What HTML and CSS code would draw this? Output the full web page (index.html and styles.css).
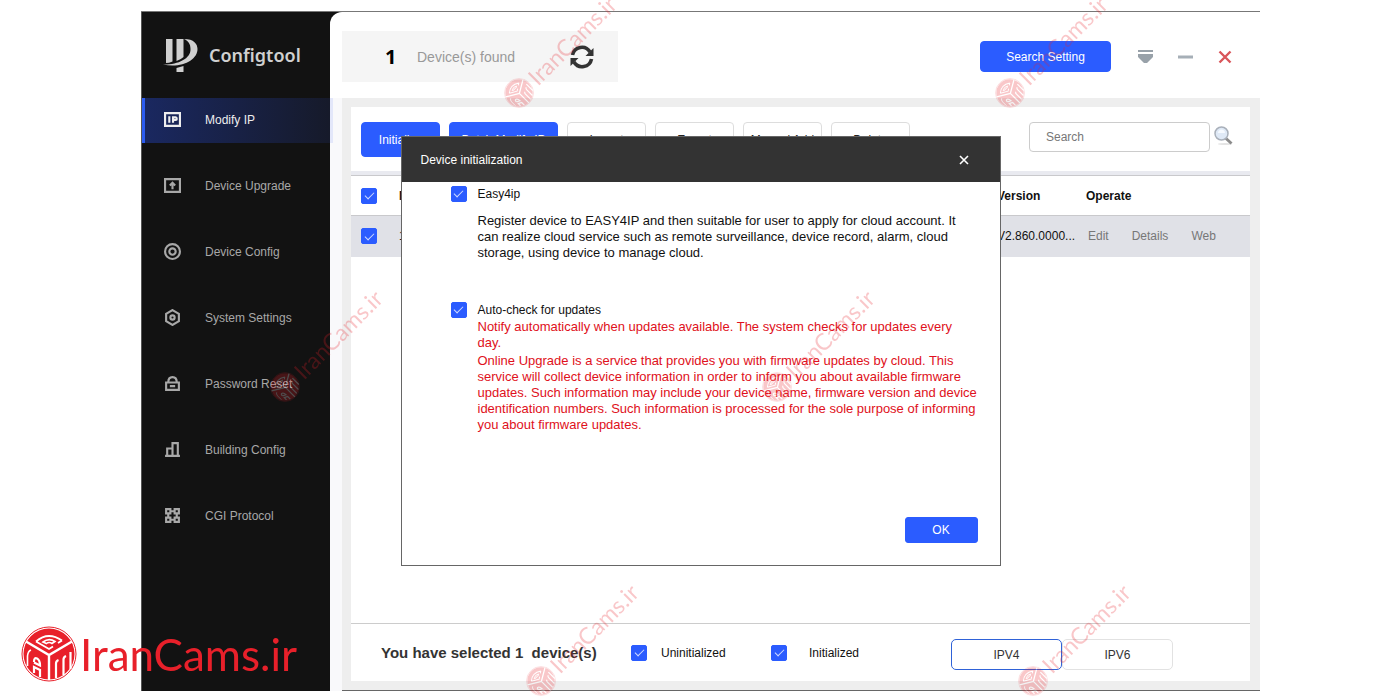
FILE: index.html
```html
<!DOCTYPE html>
<html lang="en">
<head>
    <meta charset="UTF-8">
    <meta name="viewport" content="width=device-width, initial-scale=1.0">
    <title>Configtool</title>
    <link rel="stylesheet" href="styles.css">
</head>
<body>
    <!-- shared brand symbol -->
    <svg class="defs" width="0" height="0" aria-hidden="true">
        <symbol id="cube" viewBox="0 0 56 56">
            <circle cx="28" cy="28" r="27" fill="none" stroke="currentColor" stroke-width="1"/>
            <circle cx="28" cy="28" r="25.500" fill="currentColor"/>
            <g fill="none" stroke="#fff" stroke-width="2.400">
                <path d="M5 15.500L28 29L51 15.500M28 29V54"/>
                <path d="M15 15.500Q27 5 41 14.500M41 14.500L37 17M15 15.500L28 23L32 20.500" stroke-width="1.800"/>
                <path d="M22 16Q28 11.500 34 15.500L31 17.500Q28 15.500 25.500 17.500Z" stroke-width="1.600"/>
                <path d="M8 44V34Q9 24 16 27.500Q23 31 23.500 39V52" stroke-width="0"/>
                <path d="M13 47V41L19 44V51M13 36Q13 31 16 32.500Q19 34 19 39.500L13 36.500" stroke-width="2.200"/>
                <path d="M6.500 40V30Q7 25 10 24" stroke-width="1.600"/>
                <path d="M35 52V37.500Q35 35 37.500 34M42.500 49V33.500Q42.500 31 45 30M49.500 43V26" stroke-width="2.200"/>
            </g>
        </symbol>
    </svg>

    <div class="window">
        <aside class="sidebar">
            <div class="logo">
                <svg width="35" height="33" viewBox="0 0 35 33" fill="#d0d0d0" aria-hidden="true">
                    <path d="M3 0H9.500V22.500Q6 24 3 24Z"/>
                    <path d="M13.500 0H20.500V18Q18 20.500 13.500 22Z"/>
                    <path d="M21 0C31 0 34.500 5 34.500 10C34.500 21 19 29.500 0 25.500C14 26 28 20 27.500 10C27.500 5 25.500 2 21 0Z"/>
                    <path d="M13.500 29L20.500 27V33H13.500Z"/>
                </svg>
                <span>Configtool</span>
            </div>
            <nav class="menu">
                <a href="#" class="active">
                    <svg viewBox="0 0 16 16"><path d="M1 2H15V14H1Z"/><path d="M5 5V11M8.500 11V6H11Q12 6 12 7.500Q12 8.500 11 8.500H8.500"/></svg>
                    Modify IP
                </a>
                <a href="#">
                    <svg viewBox="0 0 16 16"><path d="M1 2H15V14H1Z"/><path d="M8 11.500V6M5.500 8L8 5.500L10.500 8"/></svg>
                    Device Upgrade
                </a>
                <a href="#">
                    <svg viewBox="0 0 16 16"><circle cx="8" cy="8" r="7"/><circle cx="8" cy="8" r="3"/></svg>
                    Device Config
                </a>
                <a href="#">
                    <svg viewBox="0 0 16 16"><path d="M8 1L14 4.500V11.500L8 15L2 11.500V4.500Z"/><circle cx="8" cy="8" r="2"/></svg>
                    System Settings
                </a>
                <a href="#">
                    <svg viewBox="0 0 16 16"><path d="M2 7H14V14H2Z"/><path d="M4 7Q4 2 8 2Q12 2 12 7M5.500 10.500H10.500"/></svg>
                    Password Reset
                </a>
                <a href="#">
                    <svg viewBox="0 0 16 16"><path d="M1 14H15M3 14V7H7.500M8 14V2H13V14"/></svg>
                    Building Config
                </a>
                <a href="#">
                    <svg viewBox="0 0 16 16"><path d="M2 2H6V6H2ZM10 2H14V6H10ZM2 10H6V14H2ZM10 10H14V14H10ZM6 4H10M6 12H10M4 6V10M12 6V10"/></svg>
                    CGI Protocol
                </a>
            </nav>
        </aside>

        <main class="main">
            <header class="topbar">
                <div class="found">
                    <strong>1</strong>
                    <span>Device(s) found</span>
                    <button class="icon-btn" aria-label="Refresh">
                        <svg width="24" height="24" viewBox="0 0 24 24" fill="none" stroke="#333" stroke-width="3.600">
                            <path d="M2.500 10A9.500 9.500 0 0 1 20 7"/>
                            <path d="M21.500 14A9.500 9.500 0 0 1 4 17"/>
                            <path d="M23.500 3V11H15.500Z" fill="#333" stroke="none"/>
                            <path d="M.5 21V13H8.500Z" fill="#333" stroke="none"/>
                        </svg>
                    </button>
                </div>
                <div class="window-tools">
                    <button class="btn primary search-setting">Search Setting</button>
                    <button class="icon-btn" aria-label="Menu">
                        <svg width="15" height="14" viewBox="0 0 15 14" fill="#98a1a9"><path d="M0 0H15V2H0ZM0 4H15V7L9 13H6L0 7Z"/></svg>
                    </button>
                    <button class="icon-btn" aria-label="Minimize">
                        <svg width="15" height="14" viewBox="0 0 15 14"><path d="M0 7H15" stroke="#a6afb7" stroke-width="3"/></svg>
                    </button>
                    <button class="icon-btn" aria-label="Close">
                        <svg width="14" height="14" viewBox="0 0 14 14"><path d="M1.500 1.500L12.500 12.500M12.500 1.500L1.500 12.500" stroke="#d9555a" stroke-width="2.400"/></svg>
                    </button>
                </div>
            </header>

            <div class="content">
                <div class="toolbar">
                    <button class="btn primary">Initialize</button>
                    <button class="btn primary wide">Batch Modify IP</button>
                    <button class="btn">Import</button>
                    <button class="btn">Export</button>
                    <button class="btn">Manual Add</button>
                    <button class="btn">Delete</button>
                    <div class="search">
                        <input type="text" placeholder="Search" aria-label="Search">
                        <button class="icon-btn" aria-label="Search">
                            <svg width="20" height="20" viewBox="0 0 20 20">
                                <ellipse cx="11" cy="18" rx="7" ry="1" fill="#e4e4e4"/>
                                <path d="M11.500 12L17.500 17.500" stroke="#8b8b8b" stroke-width="3"/>
                                <circle cx="7.500" cy="7.500" r="6.500" fill="#dfe9f6" stroke="#a9b0ba" stroke-width="1.500"/>
                                <path d="M4 7Q4 4 7 3.500Q11 3.500 11 7Z" fill="#f6faff"/>
                            </svg>
                        </button>
                    </div>
                </div>

                <div class="list">
                    <table>
                        <thead>
                            <tr>
                                <th class="col-check"><input type="checkbox" aria-label="Select all" checked></th>
                                <th class="col-no">No.</th>
                                <th class="col-version">Version</th>
                                <th class="col-operate">Operate</th>
                            </tr>
                        </thead>
                        <tbody>
                            <tr>
                                <td><input type="checkbox" aria-label="Select device 1" checked></td>
                                <td>1</td>
                                <td>V2.860.0000...</td>
                                <td>
                                    <div class="actions">
                                        <a href="#">Edit</a>
                                        <a href="#">Details</a>
                                        <a href="#">Web</a>
                                    </div>
                                </td>
                            </tr>
                        </tbody>
                    </table>
                </div>

                <footer class="footer">
                    <p>You have selected 1 &nbsp;device(s)</p>
                    <label class="filter"><input type="checkbox" checked>Uninitialized</label>
                    <label class="filter"><input type="checkbox" checked>Initialized</label>
                    <div class="ip-switch">
                        <button class="active">IPV4</button>
                        <button>IPV6</button>
                    </div>
                </footer>
            </div>
        </main>

        <div class="overlay">
            <section class="dialog" role="dialog" aria-labelledby="dialog-title">
                <header>
                    <h2 id="dialog-title">Device initialization</h2>
                    <button class="icon-btn" aria-label="Close dialog">
                        <svg width="10" height="10" viewBox="0 0 10 10"><path d="M1 1L9 9M9 1L1 9" stroke="#fff" stroke-width="1.600"/></svg>
                    </button>
                </header>
                <div class="dialog-body">
                    <div class="option easy4ip">
                        <label><input type="checkbox" checked>Easy4ip</label>
                        <p>Register device to EASY4IP and then suitable for user to apply for cloud account. It<br>can realize cloud service such as remote surveillance, device record, alarm, cloud<br>storage, using device to manage cloud.</p>
                    </div>
                    <div class="option notice">
                        <label><input type="checkbox" checked>Auto-check for updates</label>
                        <p>Notify automatically when updates available. The system checks for updates every<br>day.</p>
                        <p>Online Upgrade is a service that provides you with firmware updates by cloud. This<br>service will collect device information in order to inform you about available firmware<br>updates. Such information may include your device name, firmware version and device<br>identification numbers. Such information is processed for the sole purpose of informing<br>you about firmware updates.</p>
                    </div>
                    <div class="dialog-actions">
                        <button class="btn primary">OK</button>
                    </div>
                </div>
            </section>
        </div>
    </div>

    <!-- watermarks -->
    <div class="marks">
        <div class="mark m1"><svg><use href="#cube"/></svg><span>IranCams.ir</span></div>
        <div class="mark m2"><svg><use href="#cube"/></svg><span>IranCams.ir</span></div>
        <div class="mark m3"><svg><use href="#cube"/></svg><span>IranCams.ir</span></div>
        <div class="mark m4"><svg><use href="#cube"/></svg><span>IranCams.ir</span></div>
        <div class="mark m5"><svg><use href="#cube"/></svg><span>IranCams.ir</span></div>
        <div class="mark m6"><svg><use href="#cube"/></svg><span>IranCams.ir</span></div>
        <div class="brand"><svg><use href="#cube"/></svg><span>IranCams.ir</span></div>
    </div>
</body>
</html>
```
FILE: styles.css
```css
* {
    box-sizing: border-box;
}
body {
    margin: 0;
    padding: 11px 140px 9px 141px;
    background: #fff;
    font-family: "Liberation Sans", Arial, sans-serif;
    font-size: 12px;
    color: #111;
}
button, input {
    font: inherit;
}
a {
    color: inherit;
    text-decoration: none;
}
.defs {
    position: absolute;
}
.window {
    position: relative;
    display: flex;
    min-height: calc(100vh - 20px);
    background: #121212;
    border-top: 1px solid #777;
}

/* sidebar */
.sidebar {
    width: 189px;
    flex-shrink: 0;
    border-left: 1px solid #555;
}
.logo {
    display: flex;
    align-items: center;
    gap: 11px;
    height: 86px;
    padding-left: 21px;
    color: #d0d0d0;
    font-family: "Noto Sans", sans-serif;
    font-size: 18px;
    font-weight: 600;
}
.menu {
    display: flex;
    flex-direction: column;
    gap: 21px;
}
.menu a {
    display: flex;
    align-items: center;
    gap: 24px;
    height: 45px;
    padding: 0 0 2px 22px;
    color: #a8a8a8;
}
.menu a.active {
    position: relative;
    z-index: 1;
    margin-right: -3px;
    padding-left: 19px;
    border-left: 3px solid #2c5cf0;
    background: linear-gradient(90deg, #1a2860, #161a2a 185px, #e3e7fa 185px);
    color: #eee;
}
.menu svg {
    width: 17px;
    height: 17px;
    fill: none;
    stroke: currentColor;
    stroke-width: 2;
}

/* main area */
.main {
    flex: 1;
    display: flex;
    flex-direction: column;
    min-width: 0;
    padding-left: 12px;
    background: linear-gradient(#fff 86px, #f9f9fb 86px);
    border-top-left-radius: 12px;
}
.topbar {
    display: flex;
    align-items: center;
    justify-content: space-between;
    height: 86px;
    padding: 3px 28px 0 0;
}
.found {
    display: flex;
    align-items: center;
    width: 276px;
    height: 51px;
    padding: 0 24px 0 43px;
    background: #f5f5f5;
    color: #999;
    font-size: 14px;
}
.found strong {
    width: 32px;
    color: #000;
    font-family: "Noto Sans", sans-serif;
    font-size: 20px;
}
.found .icon-btn {
    margin-left: auto;
}
.window-tools {
    display: flex;
    align-items: center;
    gap: 25px;
}
.icon-btn {
    display: flex;
    padding: 0;
    border: 0;
    background: none;
    cursor: pointer;
}
.btn {
    width: 79px;
    height: 35px;
    padding: 0;
    border: 1px solid #ddd;
    border-radius: 4px;
    background: #fff;
    color: #222;
    cursor: pointer;
}
.btn.primary {
    border-color: #2b5cff;
    background: #2b5cff;
    color: #fff;
}
.btn.wide {
    width: 109px;
}
.btn.search-setting {
    width: 131px;
    height: 31px;
    margin-right: 2px;
}
.content {
    flex: 1;
    display: flex;
    flex-direction: column;
    padding: 9px 10px 9px 9px;
    background: #eee;
    border-bottom: 1px solid #666;
}
.toolbar {
    display: flex;
    gap: 9px;
    height: 64px;
    padding: 15px 16px 0 10px;
    background: #fff;
}
.search {
    display: flex;
    align-items: flex-start;
    gap: 4px;
    margin-left: auto;
}
.search input {
    width: 181px;
    height: 30px;
    padding: 0 16px;
    border: 1px solid #ccc;
    border-radius: 4px;
}
.search input::placeholder {
    color: #777;
}
.search .icon-btn {
    margin-top: 4px;
}
.list {
    flex: 1;
    border-top: 4px solid #e9eaf0;
    background: #fff;
}
table {
    width: 100%;
    border-collapse: collapse;
    table-layout: fixed;
}
th, td {
    padding: 0;
    border-top: 1px solid #c9c9cc;
    text-align: left;
    white-space: nowrap;
}
th {
    height: 40px;
}
td {
    height: 41px;
    background: #e0e1e7;
}
th:first-child, td:first-child {
    padding-left: 10px;
}
.col-check {
    width: 48px;
}
.col-version {
    width: 89px;
}
.col-operate {
    width: 164px;
}
.actions {
    display: flex;
    gap: 23px;
    padding-left: 2px;
    color: #777;
}
input[type="checkbox"] {
    display: grid;
    place-items: center;
    flex-shrink: 0;
    appearance: none;
    width: 16px;
    height: 16px;
    margin: 0;
    border: 1px solid #aaa;
    border-radius: 2px;
}
input[type="checkbox"]:checked {
    border-color: #2b5cff;
    background: #2b5cff;
}
input[type="checkbox"]:checked::after {
    content: "";
    width: 8px;
    height: 4px;
    margin-bottom: 2px;
    border: solid #cfdaff;
    border-width: 0 0 1px 1px;
    transform: rotate(-45deg);
}
.footer {
    display: flex;
    align-items: center;
    height: 58px;
    padding: 0 77px 0 30px;
    border-top: 1px solid #ccc;
    background: #fff;
}
.footer p {
    width: 250px;
    margin: 0;
    color: #333;
    font-size: 15px;
    font-weight: bold;
}
.filter {
    display: flex;
    align-items: center;
    gap: 14px;
    width: 140px;
}
.filter + .filter {
    gap: 22px;
}
.ip-switch {
    display: flex;
    margin: 4px 0 0 auto;
}
.ip-switch button {
    width: 111px;
    height: 31px;
    border: 1px solid #e2e2e2;
    border-radius: 5px;
    background: #fff;
    color: #333;
}
.ip-switch .active {
    border-color: #2f62d8;
}

/* dialog */
.overlay {
    position: absolute;
    inset: 0;
    display: grid;
    place-items: center;
    padding-bottom: 2px;
}
.dialog {
    width: 600px;
    min-height: 430px;
    display: flex;
    flex-direction: column;
    border: 1px solid #666;
    background: #fff;
}
.dialog header {
    display: flex;
    align-items: center;
    justify-content: space-between;
    height: 45px;
    padding: 2px 31px 0 19px;
    background: #333;
    color: #fff;
}
.dialog h2 {
    margin: 0;
    font-size: 12px;
    font-weight: normal;
}
.dialog-body {
    flex: 1;
    display: flex;
    flex-direction: column;
    padding: 4px 22px 22px 49px;
}
.option label {
    display: flex;
    align-items: center;
    gap: 11px;
    height: 16px;
}
.option p {
    margin: 0 0 2px 27px;
    font-size: 13px;
    line-height: 16px;
    white-space: nowrap;
}
.easy4ip label {
    margin-bottom: 11px;
}
.notice {
    margin-top: 39px;
}
.notice label {
    margin-bottom: 1px;
}
.notice p {
    color: #e01020;
}
.dialog-actions {
    display: flex;
    justify-content: flex-end;
    margin-top: auto;
}
.dialog-actions .btn {
    width: 73px;
    height: 26px;
    border-radius: 3px;
}

/* watermarks lie over everything */
.marks {
    position: fixed;
    inset: 0;
    overflow: hidden;
    pointer-events: none;
    color: #e8202a;
    font-family: Lato, sans-serif;
}
.mark {
    position: absolute;
    display: flex;
    align-items: center;
    gap: 3px;
    height: 30px;
    font-size: 23px;
    opacity: 0.25;
    transform: rotate(-45deg);
    transform-origin: 15px 15px;
}
.mark svg {
    width: 30px;
    height: 30px;
}
.m1 { left: 504px; top: 78px; }
.m2 { left: 995px; top: 78px; }
.m3 { left: 270px; top: 372px; }
.m4 { left: 762px; top: 372px; }
.m5 { left: 526px; top: 666px; }
.m6 { left: 1018px; top: 666px; }
.brand {
    position: absolute;
    left: 21px;
    bottom: 18px;
    display: flex;
    align-items: center;
    gap: 3px;
    font-size: 44px;
    line-height: 56px;
}
.brand svg {
    width: 56px;
    height: 56px;
}
```
